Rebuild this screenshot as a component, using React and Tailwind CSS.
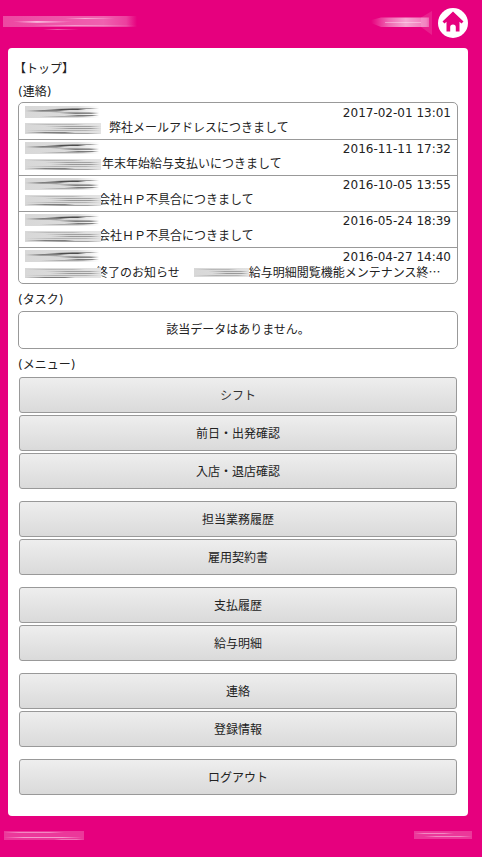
import React from 'react';

const messages = [
    { date: '2017-02-01 13:01', text: '弊社メールアドレスにつきまして', space: 'ml-[8px]' },
    { date: '2016-11-11 17:32', text: '年末年始給与支払いにつきまして', space: 'ml-[1px]' },
    { date: '2016-10-05 13:55', text: '会社ＨＰ不具合につきまして', space: '-ml-[3px]' },
    { date: '2016-05-24 18:39', text: '会社ＨＰ不具合につきまして', space: '-ml-[3px]' },
];

const menuGroups = [
    ['シフト', '前日・出発確認', '入店・退店確認'],
    ['担当業務履歴', '雇用契約書'],
    ['支払履歴', '給与明細'],
    ['連絡', '登録情報'],
    ['ログアウト'],
];

// [y, x from, x to, opacity]
const grayTop = [
    [2, 30, 75, 0.45], [3, 20, 62, 0.85], [4, 0, 45, 0.55], [5, 0, 40, 0.35],
    [6, 25, 75, 0.35], [7, 35, 75, 0.55], [9, 40, 75, 0.6], [10, 15, 70, 0.3],
];
const grayBottom = [
    [1, 0, 60, 0.2], [3, 20, 76, 0.35], [5, 25, 76, 0.4], [7, 0, 76, 0.25],
    [9, 0, 50, 0.55], [10, 10, 76, 0.35],
];

// blurred-out text in the list
const GraySmear = ({ width, height, lines, solid }) => {
    const id = React.useId();
    const base = `${id}b`;
    const scale = width / 76;
    return (
        <svg width={width} height={height} className="relative z-10 block shrink-0">
            <defs>
                <linearGradient id={id}>
                    <stop offset="0" stopColor="#444" stopOpacity="0" />
                    <stop offset="0.4" stopColor="#333" />
                    <stop offset="0.8" stopColor="#333" />
                    <stop offset="1" stopColor="#444" stopOpacity="0" />
                </linearGradient>
                <linearGradient id={base}>
                    <stop offset="0" stopColor="#d8d8d8" />
                    <stop offset="0.7" stopColor="#dcdcdc" />
                    <stop offset="1" stopColor="#e4e4e4" stopOpacity={solid ? 1 : 0} />
                </linearGradient>
            </defs>
            <rect x="0" y="0" width={width} height={height} fill={`url(#${base})`} />
            {lines.map(([y, a, b, op]) => (
                <rect key={y} x={a * scale} y={y} width={(b - a) * scale} height="1" fill={`url(#${id})`} opacity={op} />
            ))}
        </svg>
    );
};

// the same smear on the pink bars, in white
const PinkSmear = ({ width, height, lines, base = 0.22 }) => {
    const id = React.useId();
    return (
        <svg width={width} height={height} className="block shrink-0">
            <defs>
                <linearGradient id={id}>
                    <stop offset="0" stopColor="#fff" stopOpacity="0" />
                    <stop offset="0.25" stopColor="#fff" />
                    <stop offset="0.75" stopColor="#fff" />
                    <stop offset="1" stopColor="#fff" stopOpacity="0" />
                </linearGradient>
            </defs>
            <rect x="0" y="0" width={width} height={height} fill="#fff" opacity={base} />
            {lines.map(([y, a, b, op], i) => (
                <rect key={i} x={a} y={y} width={b - a} height="1" fill={`url(#${id})`} opacity={op} />
            ))}
        </svg>
    );
};

const HeaderLeftSmear = () => (
    <svg width="136" height="17" className="block shrink-0">
        <defs>
            <linearGradient id="hl">
                <stop offset="0" stopColor="#fff" stopOpacity="0.28" />
                <stop offset="0.75" stopColor="#fff" stopOpacity="0.38" />
                <stop offset="0.92" stopColor="#fff" stopOpacity="0.25" />
                <stop offset="1" stopColor="#fff" stopOpacity="0" />
            </linearGradient>
            <linearGradient id="hs">
                <stop offset="0" stopColor="#fff" stopOpacity="0" />
                <stop offset="0.4" stopColor="#fff" />
                <stop offset="1" stopColor="#fff" stopOpacity="0" />
            </linearGradient>
        </defs>
        <rect x="0" y="0" width="134" height="11" fill="url(#hl)" />
        <rect x="10" y="5" width="60" height="1" fill="url(#hs)" opacity="0.6" />
        <rect x="14" y="6" width="50" height="1" fill="url(#hs)" opacity="0.5" />
        <rect x="62" y="2" width="50" height="1" fill="url(#hs)" opacity="0.5" />
        <rect x="30" y="9" width="104" height="1" fill="url(#hs)" opacity="0.4" />
        <rect x="40" y="13" width="36" height="1" fill="url(#hs)" opacity="0.35" />
    </svg>
);

const HeaderRightSmear = () => (
    <svg width="61" height="25" className="block shrink-0">
        <defs>
            <linearGradient id="hr">
                <stop offset="0" stopColor="#fff" stopOpacity="0" />
                <stop offset="0.3" stopColor="#fff" stopOpacity="0.4" />
                <stop offset="0.6" stopColor="#fff" stopOpacity="0.65" />
                <stop offset="0.95" stopColor="#fff" stopOpacity="0.45" />
                <stop offset="1" stopColor="#fff" stopOpacity="0.3" />
            </linearGradient>
        </defs>
        <path d="M0 10 L10 7.5 L58 7.5 L58 17 L10 17 L0 13 Z" fill="url(#hr)" />
        <path d="M50 7.5 L61 1 L61 25 L50 17 Z" fill="#fff" opacity="0.12" />
        <rect x="14" y="12" width="36" height="1" fill="#fff" opacity="0.35" />
    </svg>
);

const HomeIcon = () => (
    <svg width="30" height="30" viewBox="0 0 30 30" className="block shrink-0">
        <circle cx="15" cy="15" r="15" fill="#fff" />
        <path fill="#e6007e" d="M15 3.5 L25.5 13.5 L23.5 15.5 L21.5 13.8 L21.5 23.5 L17.8 23.5 L17.8 19 Q17.8 16.5 15 16.5 Q12.2 16.5 12.2 19 L12.2 23.5 L8.5 23.5 L8.5 13.8 L6.5 15.5 L4.5 13.5 Z" />
    </svg>
);

const MessageRow = ({ date, text, space, first }) => (
    <div className={`border-b border-[#999] px-[6px] leading-[14px] ${first ? 'h-[37px] pt-[3px]' : 'h-9 pt-[2px]'}`}>
        <div className="flex h-[15px] items-start justify-between">
            <GraySmear width={75} height={12} lines={grayTop} />
            <span>{date}</span>
        </div>
        <div className="flex h-[14px] items-center whitespace-nowrap">
            <GraySmear width={76} height={11} lines={grayBottom} solid />
            <span className={space}>{text}</span>
        </div>
    </div>
);

const MenuButton = ({ label }) => (
    <button className={`block h-9 w-full rounded-[3px] border border-[#999] bg-linear-to-b from-[#eeeeee] to-[#dadada] pt-px text-center text-[12px] leading-[34px] ${label === 'シフト' ? 'text-[#333]' : 'text-[#222]'}`}>
        {label}
    </button>
);

export default function App() {
    return (
        <div className="flex min-h-[857px] flex-col bg-[#e6007e] font-['DejaVu_Sans','Noto_Sans_CJK_JP',sans-serif] text-[12px] text-[#222]">
            <header className="flex h-12 items-start justify-between pl-[3px] pr-[14px]">
                <div className="mt-4">
                    <HeaderLeftSmear />
                </div>
                <div className="flex items-start">
                    <div className="mt-[10px] mr-[6px]">
                        <HeaderRightSmear />
                    </div>
                    <div className="mt-2">
                        <HomeIcon />
                    </div>
                </div>
            </header>

            <main className="ml-2 mr-[14px] h-[768px] rounded-[4px] bg-white px-[10px] pt-[14px]">
                <p className="-ml-[4px] h-[22px] leading-[15px]">【トップ】</p>
                <p className="h-[18px] pt-px leading-[15px]">(連絡)</p>

                <div className="h-[182px] overflow-hidden rounded-[5px] border border-[#999]">
                    {messages.map((m, i) => (
                        <MessageRow key={m.date} first={i === 0} {...m} />
                    ))}
                    <div className="px-[6px] pt-[2px] leading-[14px]">
                        <div className="flex h-[15px] items-start justify-between">
                            <GraySmear width={75} height={12} lines={grayTop} />
                            <span>2016-04-27 14:40</span>
                        </div>
                        <div className="flex h-[15px] items-center whitespace-nowrap">
                            <GraySmear width={76} height={10} lines={grayBottom} solid />
                            <span className="-ml-[5px]">終了のお知らせ</span>
                            <span className="w-[14px]" />
                            <GraySmear width={55} height={9} lines={grayBottom} solid />
                            <span>給与明細閲覧機能メンテナンス終<span className="font-['Noto_Sans_CJK_JP',sans-serif]">…</span></span>
                        </div>
                    </div>
                </div>

                <p className="mt-[9px] h-[18px] leading-[15px]">(タスク)</p>
                <div className="h-[38px] rounded-[5px] border border-[#999] text-center leading-[36px]">
                    該当データはありません。
                </div>

                <p className="mt-[9px] h-[19px] leading-[15px]">(メニュー)</p>
                <div className="flex flex-col gap-[12px] px-px">
                    {menuGroups.map((group) => (
                        <div key={group[0]} className="flex flex-col gap-[2px]">
                            {group.map((label) => (
                                <MenuButton key={label} label={label} />
                            ))}
                        </div>
                    ))}
                </div>
            </main>

            <footer className="flex h-[41px] items-start justify-between pl-1 pr-[10px] pt-[15px]">
                <PinkSmear width={80} height={9} lines={[[1, 0, 60, 0.4], [6, 0, 78, 0.5], [8, 50, 80, 0.3]]} />
                <PinkSmear width={58} height={8} lines={[[2, 0, 40, 0.4], [5, 10, 58, 0.4]]} />
            </footer>
        </div>
    );
}
